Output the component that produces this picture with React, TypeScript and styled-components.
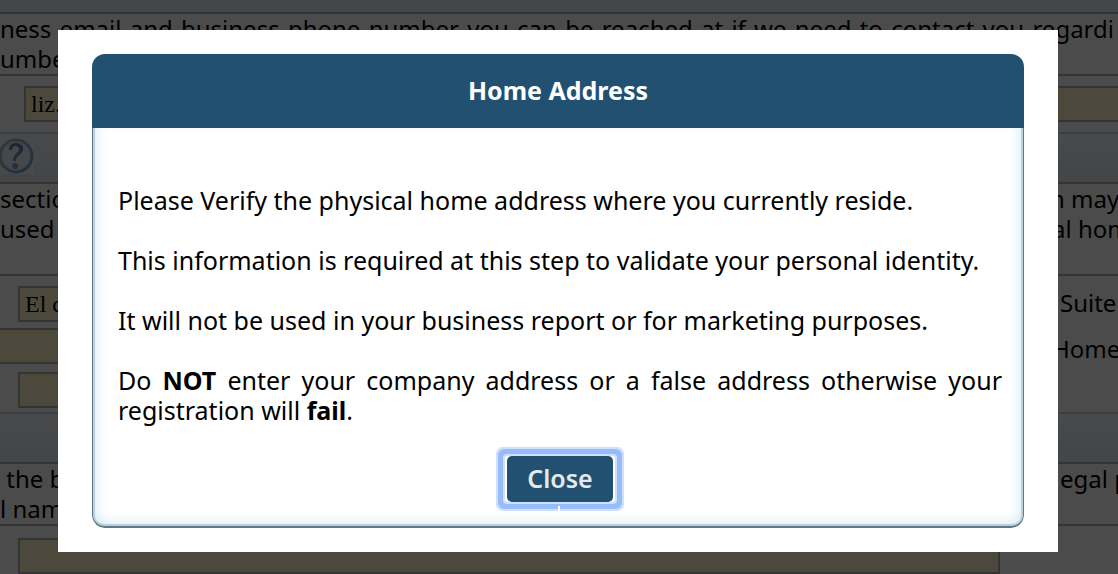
import React from "react";
import styled, { createGlobalStyle } from "styled-components";

const sans = `"Noto Sans", "Open Sans", sans-serif`;

const GlobalStyle = createGlobalStyle`
  * { box-sizing: border-box; }
  html, body { margin: 0; height: 100%; overflow: hidden; background: #fcfcfc; }
  body { font: 24px/30px ${sans}; color: #000; }
`;

const Page = styled.main`
  display: flex;
  flex-direction: column;
`;

const SectionBar = styled.header<{ $height: number; $first?: boolean }>`
  flex: none;
  display: flex;
  align-items: flex-start;
  padding-top: ${(p) => (p.$first ? 0 : 4)}px;
  height: ${(p) => p.$height}px;
  border-top: ${(p) => (p.$first ? "0" : "2px solid #c6d8ec")};
  border-bottom: 2px solid #aeaeae;
  background: ${(p) => (p.$first ? "#e2eff7" : "linear-gradient(#f0f4f8, #dfebf2)")};
`;

const HelpButton = styled.button`
  width: 34px;
  height: 36px;
  padding: 0;
  border: 0;
  background: #f2f4f6;
  svg { display: block; }
`;

const Intro = styled.section<{ $tall?: boolean }>`
  flex: none;
  height: ${(p) => (p.$tall ? 92 : 62)}px;
  border-bottom: 2px solid #aeaeae;
  overflow: hidden;
`;

const Line = styled.p`
  display: flex;
  justify-content: space-between;
  margin: 0;
  white-space: nowrap;
`;

const FullLine = styled.p`
  margin: 0;
  padding-right: 4px;
  text-align: justify;
  text-align-last: justify;
`;

const Tail = styled.span<{ $width: number }>`
  flex: none;
  width: ${(p) => p.$width}px;
  white-space: nowrap;
`;

const Fields = styled.div`
  flex: none;
  display: flex;
  justify-content: space-between;
`;

const FieldColumn = styled.div<{ $pad: string; $bleed?: boolean }>`
  flex: 1;
  min-width: 0;
  display: flex;
  flex-direction: column;
  margin-right: ${(p) => (p.$bleed ? -4 : 0)}px;
  padding: ${(p) => p.$pad};
`;

const Field = styled.input<{ $indent?: number; $after?: number }>`
  height: 36px;
  margin: 0 0 ${(p) => p.$after ?? 0}px ${(p) => p.$indent ?? 0}px;
  padding: 0 5px;
  border: 2px solid #aeaeae;
  border-radius: 0;
  background: #fdf3c8;
  color: #000;
  font: 24px "Liberation Serif", serif;
`;

const Labels = styled.div`
  flex: none;
  display: flex;
  flex-direction: column;
  align-items: flex-end;
  gap: 16px;
  padding-top: 12px;
`;

const Overlay = styled.div`
  position: fixed;
  inset: 0;
  padding: 30px 60px 22px 58px;
  background: rgba(0, 0, 0, 0.7);
`;

const Dialog = styled.div`
  padding: 24px 34px;
  background: #fff;
  font-size: 25px;
`;

const Panel = styled.section`
  overflow: hidden;
  border-radius: 13px;
  background: #fff;
`;

const Title = styled.h1`
  margin: 0;
  padding: 21px 0 23px;
  background: #225070;
  color: #fff;
  text-align: center;
  font-size: 25px;
  line-height: 30px;
  font-weight: 700;
`;

const Body = styled.div`
  padding: 57px 21px 24px 25px;
  border: 1px solid #607886;
  border-top: 0;
  border-bottom-width: 2px;
  border-radius: 0 0 13px 13px;
  box-shadow:
    inset 2px 0 0 #bdcfdb,
    inset -2px 0 0 #bdcfdb,
    inset 0 -2px 0 #bdcfdb,
    inset 12px 0 12px -8px #d9eef5,
    inset -12px 0 12px -8px #d9eef5,
    inset 0 -12px 12px -8px #d9eef5;
`;

const Paragraph = styled.p`
  margin: 0 0 30px;
  text-align: justify;
`;

const CloseButton = styled.button`
  position: relative;
  display: block;
  width: 110px;
  height: 46px;
  margin: 31px auto 0;
  padding: 0 2px;
  border: 0;
  border-radius: 2px;
  background: #fff;
  box-shadow: 0 0 0 2px #cfe0fd, 0 0 0 7px #96bcf9, 0 0 0 9px #cfe0fd;
  outline: 0;
  &::after {
    content: "";
    position: absolute;
    left: 53px;
    top: 50px;
    width: 2px;
    height: 5px;
    background: #fff;
  }
`;

const CloseFace = styled.span`
  display: block;
  height: 46px;
  border-radius: 5px;
  background: #225070;
  color: #e3eaed;
  font: 600 25px/44px ${sans};
`;

function HelpIcon() {
  return (
    <svg width="34" height="36" viewBox="0 0 34 36" fill="none" aria-hidden="true">
      <defs>
        <linearGradient id="ring" x1="0" y1="0" x2="1" y2="1">
          <stop offset="0" stopColor="#a3bdd4" />
          <stop offset="1" stopColor="#6f9ccb" />
        </linearGradient>
        <linearGradient id="mark" x1="0" y1="4" x2="0" y2="31" gradientUnits="userSpaceOnUse">
          <stop offset="0" stopColor="#557cae" />
          <stop offset="1" stopColor="#7fa8d0" />
        </linearGradient>
      </defs>
      <circle cx="16" cy="18" r="16" fill="#eef2f5" stroke="url(#ring)" strokeWidth="3" />
      <circle cx="16" cy="18" r="13" stroke="#e0ebf4" strokeWidth="2" />
      <path
        d="M9 12C9 7 12 5 16 5c5 0 8 3 7 7-1 5-7 5-7 11h-3c0-7 5-8 6-11 0-3-2-4-4-4-2 0-2 2-3 4z"
        fill="url(#mark)"
      />
      <circle cx="15" cy="28" r="3" fill="url(#mark)" />
    </svg>
  );
}

export default function App() {
  return (
    <>
      <GlobalStyle />
      <Page>
        <SectionBar $height={14} $first />
        <Intro>
          <FullLine>
            ness email and business phone number you can be reached at if we need to contact you regardi
          </FullLine>
          <Line>umber</Line>
        </Intro>
        <Fields>
          <FieldColumn $pad="10px 0 10px 24px" $bleed>
            <Field aria-label="Business email" defaultValue="liz." />
          </FieldColumn>
        </Fields>
        <SectionBar $height={52}>
          <HelpButton aria-label="Help">
            <HelpIcon />
          </HelpButton>
        </SectionBar>
        <Intro $tall>
          <Line>
            <span>section</span>
            <Tail $width={68}>n may</Tail>
          </Line>
          <Line>
            <span>used</span>
            <Tail $width={66}>al home</Tail>
          </Line>
        </Intro>
        <Fields>
          <FieldColumn $pad="10px 60px 4px 0">
            <Field aria-label="Street address" $indent={18} $after={6} defaultValue="El c" />
            <Field aria-label="City" $indent={-4} $after={8} />
            <Field aria-label="Postal code" $indent={18} />
          </FieldColumn>
          <Labels>
            <Tail $width={58}>Suite</Tail>
            <Tail $width={66}>Home</Tail>
          </Labels>
        </Fields>
        <SectionBar $height={52} />
        <Intro>
          <Line>
            <span>&nbsp;the business</span>
            <Tail $width={58}>egal p</Tail>
          </Line>
          <Line>l name</Line>
        </Intro>
        <Fields>
          <FieldColumn $pad="12px 118px 0 18px">
            <Field aria-label="Legal name" />
          </FieldColumn>
        </Fields>
      </Page>
      <Overlay>
        <Dialog role="dialog" aria-modal="true" aria-labelledby="dialog-title">
          <Panel>
            <Title id="dialog-title">Home Address</Title>
            <Body>
              <Paragraph>Please Verify the physical home address where you currently reside.</Paragraph>
              <Paragraph>This information is required at this step to validate your personal identity.</Paragraph>
              <Paragraph>It will not be used in your business report or for marketing purposes.</Paragraph>
              <Paragraph>
                Do <b>NOT</b> enter your company address or a false address otherwise your registration will{" "}
                <b>fail</b>.
              </Paragraph>
              <CloseButton type="button">
                <CloseFace>Close</CloseFace>
              </CloseButton>
            </Body>
          </Panel>
        </Dialog>
      </Overlay>
    </>
  );
}
